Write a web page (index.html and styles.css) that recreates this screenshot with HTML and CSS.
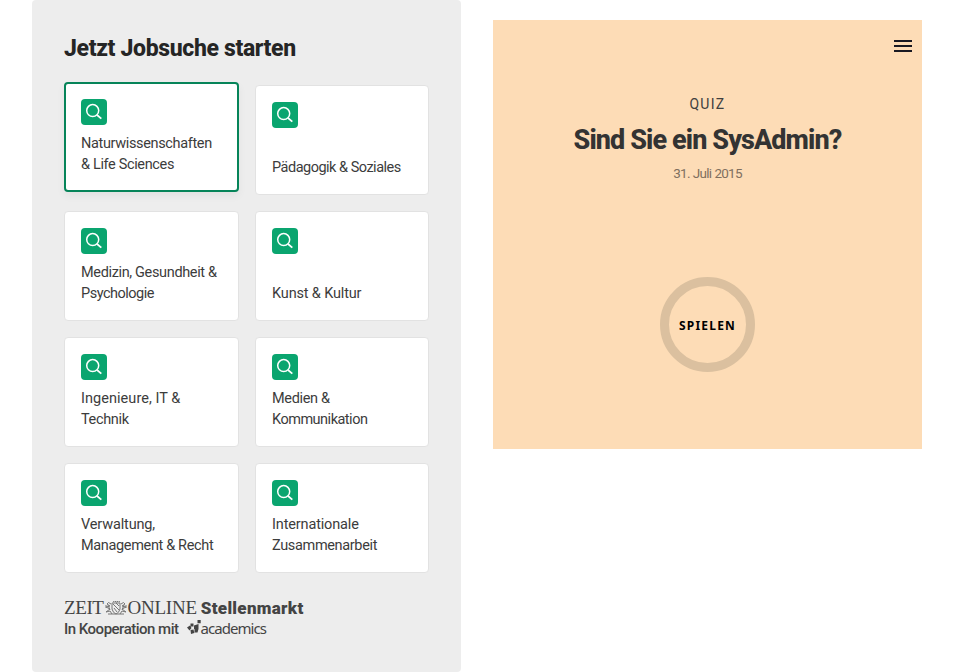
FILE: index.html
```
<!DOCTYPE html>
<html lang="de">
<head>
<meta charset="utf-8">
<title>Jobsuche und Quiz</title>
<link rel="stylesheet" href="styles.css">
</head>
<body>
<svg width="0" height="0" class="defs"><symbol id="search" viewBox="0 0 26 26"><rect width="26" height="26" rx="4" fill="#0aa56f"/><circle cx="11.7" cy="11.6" r="6" fill="none" stroke="#fff" stroke-width="1.5"/><path d="M16 16l4.300 3.700" stroke="#fff" stroke-width="1.7"/></symbol></svg>
<main class="page">
  <section class="jobs">
    <h2 class="jobs-title">Jetzt Jobsuche starten</h2>
    <div class="grid">
      <a class="card active"><svg class="icon"><use href="#search"/></svg><span>Naturwissenschaften<br>&amp; Life Sciences</span></a>
      <a class="card"><svg class="icon"><use href="#search"/></svg><span class="tight">Pädagogik &amp; Soziales</span></a>
      <a class="card"><svg class="icon"><use href="#search"/></svg><span>Medizin, Gesundheit &amp;<br><span class="tight">Psychologie</span></span></a>
      <a class="card"><svg class="icon"><use href="#search"/></svg><span class="wide">Kunst &amp; Kultur</span></a>
      <a class="card"><svg class="icon"><use href="#search"/></svg><span><span class="wider">Ingenieure, IT &amp;</span><br>Technik</span></a>
      <a class="card"><svg class="icon"><use href="#search"/></svg><span>Medien &amp;<br><span class="tight">Kommunikation</span></span></a>
      <a class="card"><svg class="icon"><use href="#search"/></svg><span><span class="wide">Verwaltung,</span><br>Management &amp; Recht</span></a>
      <a class="card"><svg class="icon"><use href="#search"/></svg><span><span class="wide">Internationale</span><br>Zusammenarbeit</span></a>
    </div>
    <footer class="partners">
      <div class="row">
        <span class="zeit">ZEIT</span>
        <svg class="crest" width="22" height="14" viewBox="0 0 22 14" fill="none" stroke="#777" stroke-width="1"><path d="M7 2h8v6q-1 4-4 5-3-1-4-5zM8 1l1.500-1 2 1 2-1 1.500 1M6 3Q3 0 2 3l3 2-4 1 4 2-4 3 4-1 2 3M16 3q3-3 4 0l-3 2 4 1-4 2 4 3-4-1-2 3M3 13h16M8 3l6 6M9 7l3 4M11 2l3 3M3 4l2 5M19 4l-2 5M1 4v3M21 4v3"/></svg>
        <span class="online">ONLINE</span>
        <span class="markt">Stellenmarkt</span>
      </div>
      <div class="row second">
        <span class="koop">In Kooperation mit</span>
        <svg class="mark" width="14" height="15" viewBox="0 0 14 15" fill="#444"><path d="M10.500 0h3.200v3.200h-3.200zM3.500 3.500h3v3h-3zM0 7.500l3-2 1.500 2.500L2.500 10.500zM3.500 10l3-.5.8 3.500-3.300 1zM7 5.500l4.500-1.500v5h-4.500zM7.500 9h4l-1 3.500H7.500z"/></svg>
        <span class="academics">academics</span>
      </div>
    </footer>
  </section>
  <section class="quiz">
    <svg class="menu" width="18" height="12" viewBox="0 0 18 12" fill="#191922"><path d="M0 0h18v2H0zM0 5h18v2H0zM0 10h18v2H0z"/></svg>
    <div class="kicker">QUIZ</div>
    <h1 class="quiz-title">Sind Sie ein SysAdmin?</h1>
    <div class="date">31. Juli 2015</div>
    <button class="play">SPIELEN</button>
  </section>
</main>
</body>
</html>
```
FILE: styles.css
```
* { box-sizing: border-box; }
body { margin: 0; background: #fff; color: #404040; font-family: Roboto, "Liberation Sans", sans-serif; }
.defs { position: absolute; }
.page { display: grid; grid-template-columns: 429px 429px; gap: 32px; padding: 0 32px; height: 672px; align-items: start; overflow: hidden; }
.jobs { height: 672px; padding: 33px 32px 32px; background: #ededed; border-radius: 4px; }
.jobs-title { margin: 0 0 20px; font-size: 23px; line-height: 32px; font-weight: 800; letter-spacing: -.35px; color: #252525; white-space: nowrap; }
.grid { display: grid; grid-template-columns: 175px 174px; grid-auto-rows: 110px; gap: 16px; }
.card { display: flex; flex-direction: column; justify-content: space-between; padding: 16px; background: #fff; border: 1px solid #e2e2e2; border-radius: 4px; font-size: 14.5px; line-height: 21px; letter-spacing: -.35px; color: #3c3c3c; white-space: nowrap; }
.tight { letter-spacing: -.5px; }
.wide { letter-spacing: -.15px; }
.wider { letter-spacing: .05px; }
.active { padding: 15px; border: 2px solid #068459; transform: translateY(-3px); box-shadow: 0 4px 8px rgba(0,0,0,.05); }
.icon { width: 26px; height: 26px; flex: none; }
.partners { margin-top: 25px; color: #444; white-space: nowrap; }
.row { display: flex; align-items: center; height: 20px; }
.zeit, .online { font: 19px/20px "Liberation Serif", serif; letter-spacing: -.4px; }
.online { letter-spacing: -.25px; }
.crest { margin: 0 1px; }
.markt { margin: -1px 0 0 4px; font-size: 17px; font-weight: 900; letter-spacing: .3px; }
.second { height: 22px; }
.koop { font-size: 15px; font-weight: 500; letter-spacing: -.5px; }
.mark { margin: -3px 0 0 8px; }
.academics { margin: -2px 0 0; font: 15px/20px "Noto Sans", sans-serif; letter-spacing: -.95px; }
.quiz { display: flex; flex-direction: column; align-items: center; height: 429px; margin-top: 20px; padding-top: 20px; background: #fddcb6; }
.menu { align-self: flex-end; margin-right: 10px; }
.kicker { margin-top: 42px; font-size: 14px; line-height: 20px; letter-spacing: 1.3px; }
.quiz-title { margin: 9px 0 7px; font-size: 27px; line-height: 34px; font-weight: 800; letter-spacing: -.9px; color: #333; white-space: nowrap; }
.date { font-size: 13.5px; line-height: 18px; letter-spacing: -.75px; word-spacing: .5px; color: #806f5e; }
.play { width: 95px; height: 95px; margin-top: 95px; padding: 2px 0 0; border: 9px solid #dbc09f; border-radius: 50%; background: transparent; font: 700 12px/20px "Noto Sans", sans-serif; letter-spacing: 1.2px; color: #000; }
```
